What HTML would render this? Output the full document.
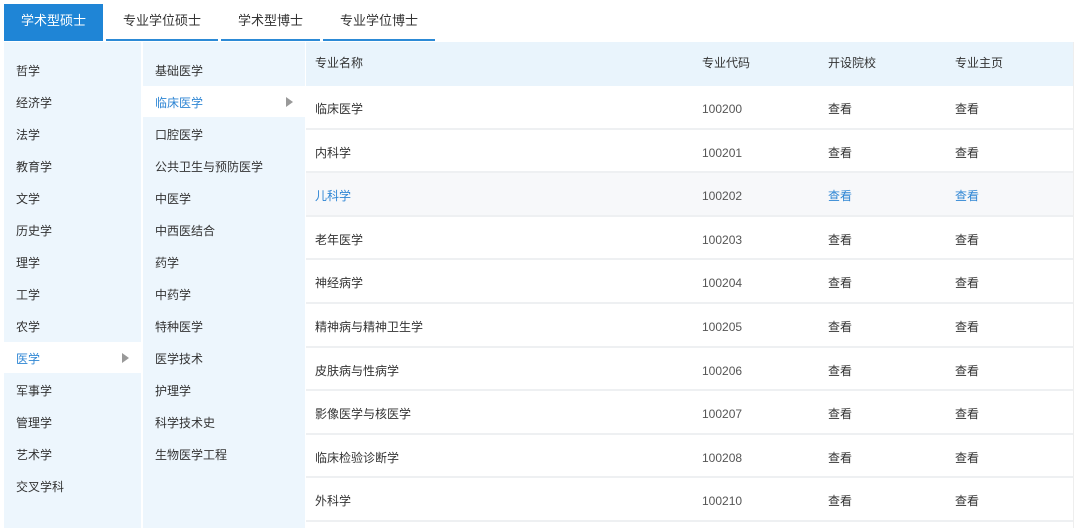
<!DOCTYPE html>
<html><head><meta charset="utf-8"><style>
*{margin:0;padding:0;box-sizing:border-box}
body{width:1080px;height:528px;background:#fff;font-family:"Liberation Sans","Noto Sans CJK SC",sans-serif;font-size:12px;color:#333;position:relative;overflow:hidden}
.tabs{position:absolute;top:4px;left:4px;height:37px;display:flex}
.tab{height:37px;line-height:34px;font-size:13px;color:#333;padding:0 17px;border-bottom:2px solid #2c8ad6;margin-right:3px}
.tab.on{background:#1f85d6;color:#fff;width:99px;padding:0;text-align:center;border-bottom:none}
.c1{position:absolute;left:4px;top:42px;width:137px;height:486px;background:#edf6fd}
.c2{position:absolute;left:143px;top:42px;width:162px;height:486px;background:#edf6fd}
.it{position:absolute;left:0;width:100%;height:31px;line-height:34px;padding-left:12px}
.it.sel{background:#fff;color:#2f86d4}
.arr{position:absolute;right:12px;top:11px;width:0;height:0;border-left:7px solid #999;border-top:5px solid transparent;border-bottom:5px solid transparent}
.tbl{position:absolute;left:306px;top:42px;width:767px}
.row{position:absolute;left:0;width:767px;height:43.6px;line-height:46px;border-bottom:2px solid #eef0f2;background:#fff}
.row.h{background:#e9f4fc;height:44px;line-height:42px;border-bottom:none}
.row span{position:absolute}
.a{left:9px}.b{left:396px;color:#555}.c{left:522px}.d{left:649px}
.row.hl{background:#f7f8fa}.row.hl .a,.row.hl .c,.row.hl .d{color:#2f86d4}
.edge{position:absolute;left:1073px;top:42px;width:1px;height:486px;background:#eee}
</style></head><body>
<div class="tabs"><div class="tab on">学术型硕士</div><div class="tab">专业学位硕士</div><div class="tab">学术型博士</div><div class="tab">专业学位博士</div></div>
<div class="c1">
<div class="it" style="top:12px">哲学</div>
<div class="it" style="top:44px">经济学</div>
<div class="it" style="top:76px">法学</div>
<div class="it" style="top:108px">教育学</div>
<div class="it" style="top:140px">文学</div>
<div class="it" style="top:172px">历史学</div>
<div class="it" style="top:204px">理学</div>
<div class="it" style="top:236px">工学</div>
<div class="it" style="top:268px">农学</div>
<div class="it sel" style="top:300px">医学<i class="arr"></i></div>
<div class="it" style="top:332px">军事学</div>
<div class="it" style="top:364px">管理学</div>
<div class="it" style="top:396px">艺术学</div>
<div class="it" style="top:428px">交叉学科</div>
</div>
<div class="c2">
<div class="it" style="top:12px">基础医学</div>
<div class="it sel" style="top:44px">临床医学<i class="arr"></i></div>
<div class="it" style="top:76px">口腔医学</div>
<div class="it" style="top:108px">公共卫生与预防医学</div>
<div class="it" style="top:140px">中医学</div>
<div class="it" style="top:172px">中西医结合</div>
<div class="it" style="top:204px">药学</div>
<div class="it" style="top:236px">中药学</div>
<div class="it" style="top:268px">特种医学</div>
<div class="it" style="top:300px">医学技术</div>
<div class="it" style="top:332px">护理学</div>
<div class="it" style="top:364px">科学技术史</div>
<div class="it" style="top:396px">生物医学工程</div>
</div>
<div class="tbl">
<div class="row h" style="top:0"><span class="a">专业名称</span><span class="b" style="color:#333">专业代码</span><span class="c">开设院校</span><span class="d">专业主页</span></div>
<div class="row" style="top:44px"><span class="a">临床医学</span><span class="b">100200</span><span class="c">查看</span><span class="d">查看</span></div>
<div class="row" style="top:87.6px"><span class="a">内科学</span><span class="b">100201</span><span class="c">查看</span><span class="d">查看</span></div>
<div class="row hl" style="top:131.2px"><span class="a">儿科学</span><span class="b">100202</span><span class="c">查看</span><span class="d">查看</span></div>
<div class="row" style="top:174.8px"><span class="a">老年医学</span><span class="b">100203</span><span class="c">查看</span><span class="d">查看</span></div>
<div class="row" style="top:218.4px"><span class="a">神经病学</span><span class="b">100204</span><span class="c">查看</span><span class="d">查看</span></div>
<div class="row" style="top:262px"><span class="a">精神病与精神卫生学</span><span class="b">100205</span><span class="c">查看</span><span class="d">查看</span></div>
<div class="row" style="top:305.6px"><span class="a">皮肤病与性病学</span><span class="b">100206</span><span class="c">查看</span><span class="d">查看</span></div>
<div class="row" style="top:349.2px"><span class="a">影像医学与核医学</span><span class="b">100207</span><span class="c">查看</span><span class="d">查看</span></div>
<div class="row" style="top:392.8px"><span class="a">临床检验诊断学</span><span class="b">100208</span><span class="c">查看</span><span class="d">查看</span></div>
<div class="row" style="top:436.4px"><span class="a">外科学</span><span class="b">100210</span><span class="c">查看</span><span class="d">查看</span></div>
</div>
<div class="edge"></div>
</body></html>
